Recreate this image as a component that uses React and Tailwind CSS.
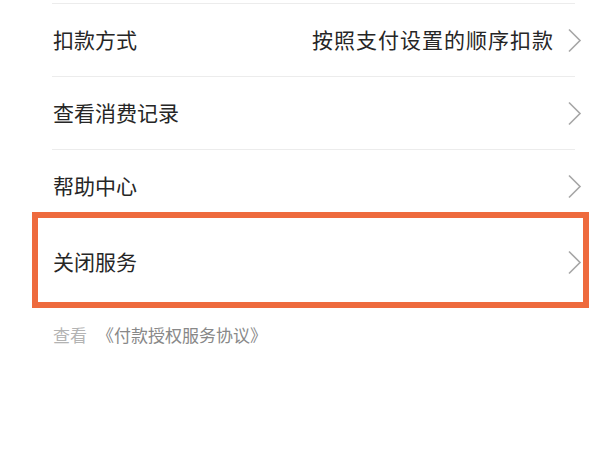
const rows = [
  { label: '扣款方式', value: '按照支付设置的顺序扣款' },
  { label: '查看消费记录' },
  { label: '帮助中心' },
]

function Chevron() {
  return (
    <svg width="15" height="25" viewBox="0 0 15 25" className="shrink-0">
      <polyline points="2,1.5 13,12.5 2,23.5" fill="none" stroke="#a6a6a6" strokeWidth="1.6" />
    </svg>
  )
}

function Row({ label, value, className = '' }) {
  return (
    <div className={`flex items-center justify-between pl-[53px] pr-[18px] ${className}`}>
      <span className="text-[21px] text-[#262626]">{label}</span>
      <div className="flex items-center gap-[13px]">
        {value && <span className="text-[21px] tracking-[1px] text-[#262626]">{value}</span>}
        <Chevron />
      </div>
    </div>
  )
}

export default function App() {
  return (
    <div
      className="relative h-[450px] w-[600px] overflow-hidden bg-white"
      style={{ fontFamily: '"Noto Sans CJK SC", "Noto Sans", sans-serif' }}
    >
      <div className="pt-[3px]">
        {rows.map((r) => (
          <div key={r.label}>
            <div className="ml-[52px] mr-[25px] h-px bg-[#ececec]" />
            <Row label={r.label} value={r.value} className="h-[72px]" />
          </div>
        ))}
        <Row label="关闭服务" className="h-[80px]" />
        <div className="flex h-[66px] items-center pl-[53px] text-[17px]">
          <span className="text-[#b3b3b3]">查看</span>
          <span className="ml-[10px] text-[#888888]">《付款授权服务协议》</span>
        </div>
      </div>

      {/* annotation box */}
      <div className="pointer-events-none absolute left-[32px] top-[212px] h-[96px] w-[557px] border-[6px] border-[#ee6a3d]" />
    </div>
  )
}
